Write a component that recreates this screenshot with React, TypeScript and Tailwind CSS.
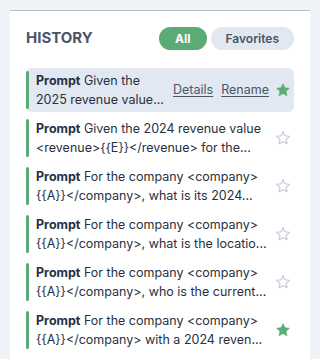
import React from 'react';

type Item = { first: string; second: string; favorite: boolean; active?: boolean };

// the two visible lines of each prompt, as the list shows them clamped
const items: Item[] = [
  { first: 'Given the', second: '2025 revenue value...', favorite: true, active: true },
  { first: 'Given the 2024 revenue value', second: '<revenue>{{E}}</revenue> for the...', favorite: false },
  { first: 'For the company <company>', second: '{{A}}</company>, what is its 2024...', favorite: false },
  { first: 'For the company <company>', second: '{{A}}</company>, what is the locatio...', favorite: false },
  { first: 'For the company <company>', second: '{{A}}</company>, who is the current...', favorite: false },
  { first: 'For the company <company>', second: '{{A}}</company> with a 2024 reven...', favorite: true },
];

const StarIcon = ({ filled }: { filled: boolean }) => (
  <svg viewBox="0 0 24 24" className="w-4 h-4 shrink-0">
    <path
      d="M12 2.5l2.9 6.1 6.6.8-4.9 4.6 1.3 6.6L12 17.3l-5.9 3.3 1.3-6.6-4.9-4.6 6.6-.8z"
      fill={filled ? '#5bab77' : 'none'}
      stroke={filled ? '#5bab77' : '#c3ccd9'}
      strokeWidth={filled ? 1 : 1.8}
      strokeLinejoin="round"
    />
  </svg>
);

const HistoryRow = ({ item }: { item: Item }) => (
  <div className={`flex items-center h-[44px] py-[3px] pr-[3px] rounded-md ${item.active ? 'bg-[#e2e8f2]' : ''}`}>
    <div className="w-[3px] h-[38px] rounded-full bg-[#5bab77] shrink-0" />
    <div className="flex-1 min-w-0 ml-[7px] text-[12.5px] leading-[19px] text-[#27303f]">
      <div className="truncate">
        <span className="font-bold">Prompt</span> {item.first}
      </div>
      <div className="truncate">{item.second}</div>
    </div>
    {item.active && (
      <div className="flex items-center gap-2 ml-[6px] text-[12.5px] text-[#4a5568]">
        <span className="underline underline-offset-2">Details</span>
        <span className="underline underline-offset-2">Rename</span>
      </div>
    )}
    <div className="ml-[6px]">
      <StarIcon filled={item.favorite} />
    </div>
  </div>
);

export default function App() {
  return (
    <div className="w-[320px] h-[359px] overflow-hidden bg-[#eff2f7] px-[10px] pt-[10px]" style={{ fontFamily: 'Inter, "Noto Sans", sans-serif' }}>
      <div className="h-full bg-white border-t border-[#b3bfcf] px-4 pt-4">
        <div className="flex items-center justify-between h-[23px]">
          <h2 className="text-[15px] font-bold text-[#4a5568]">HISTORY</h2>
          <div className="flex items-center gap-1">
            <button className="h-[23px] px-4 rounded-full bg-[#5bab77] text-white text-[12px] font-bold">All</button>
            <button className="h-[23px] px-[15px] rounded-full bg-[#e2e8f0] text-[#4a5568] text-[12px] font-semibold">Favorites</button>
          </div>
        </div>
        <div className="mt-[18px] flex flex-col gap-1">
          {items.map((item, i) => (
            <HistoryRow key={i} item={item} />
          ))}
        </div>
      </div>
    </div>
  );
}
